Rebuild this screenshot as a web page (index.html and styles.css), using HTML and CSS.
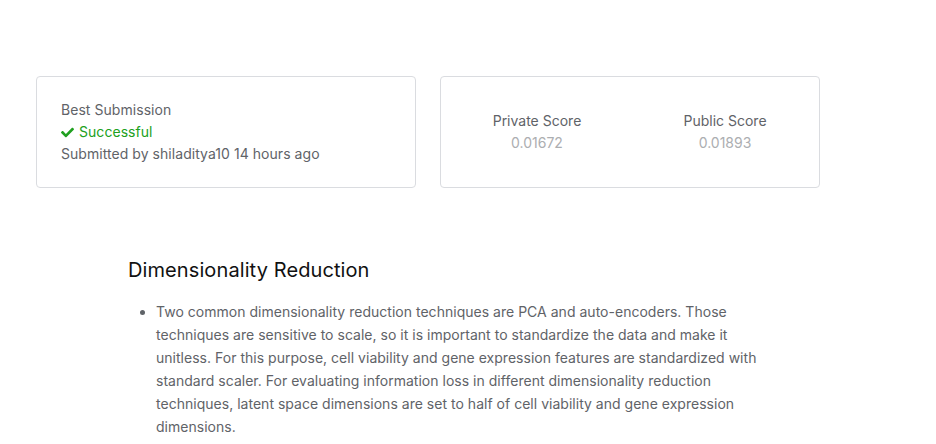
FILE: index.html
```html
<!DOCTYPE html>
<html>
<head>
<meta charset="utf-8">
<link rel="stylesheet" href="styles.css">
</head>
<body>
<div class="page">
  <div class="cards">
    <div class="card card-sub">
      <div class="label">Best Submission</div>
      <div class="status">
        <svg class="check" viewBox="0 0 512 512" width="13" height="13"><path fill="currentColor" d="M173.9 439.4L7.5 273c-10-10-10-26.2 0-36.2l36.2-36.2c10-10 26.2-10 36.2 0L192 312.7 432.1 72.6c10-10 26.2-10 36.2 0l36.2 36.2c10 10 10 26.2 0 36.2L210.1 439.4c-10 10-26.2 10-36.2 0z"/></svg>
        <span>Successful</span>
      </div>
      <div class="meta">Submitted by shiladitya10 14 hours ago</div>
    </div>
    <div class="card card-score">
      <div class="score">
        <div class="label">Private Score</div>
        <div class="value">0.01672</div>
      </div>
      <div class="score">
        <div class="label">Public Score</div>
        <div class="value">0.01893</div>
      </div>
    </div>
  </div>
  <div class="content">
    <h2>Dimensionality Reduction</h2>
    <ul>
      <li>Two common dimensionality reduction techniques are PCA and auto-encoders. Those techniques are sensitive to scale, so it is important to standardize the data and make it unitless. For this purpose, cell viability and gene expression features are standardized with standard scaler. For evaluating information loss in different dimensionality reduction techniques, latent space dimensions are set to half of cell viability and gene expression dimensions.</li>
    </ul>
  </div>
</div>
</body>
</html>
```
FILE: styles.css
```css
* { box-sizing: border-box; }
html, body { margin: 0; padding: 0; background: #fff; }
body { font-family: Inter, "Noto Sans", sans-serif; color: #5f6368; }
.page { padding: 76px 0 0 36px; }
.cards { display: flex; gap: 24px; }
.card {
  width: 380px;
  height: 112px;
  border: 1px solid #dadce0;
  border-radius: 4px;
  background: #fff;
}
.card-sub {
  padding: 22px 24px;
  font-size: 14px;
  line-height: 22px;
  letter-spacing: 0.05px;
}
.label { color: #5f6368; }
.status { color: #20a020; display: flex; align-items: center; gap: 5px; }
.check { display: block; }
.meta { color: #5f6368; }
.card-score {
  display: grid;
  grid-template-columns: 1fr 1fr;
  align-items: center;
  padding: 0 0 0 2px;
  font-size: 14px;
  line-height: 22px;
  text-align: center;
}
.score .label { color: #5f6368; }
.score .value { color: #acaeb1; }
.content { padding: 68px 0 0 92px; }
h2 {
  margin: 0;
  font-size: 20px;
  font-weight: 400;
  line-height: 28px;
  color: #111;
  letter-spacing: 0.1px;
}
ul { margin: 16px 0 0 0; padding-left: 28px; width: 640px; }
li { font-size: 14px; line-height: 23px; color: #5f6368; letter-spacing: 0.02px; }
```
